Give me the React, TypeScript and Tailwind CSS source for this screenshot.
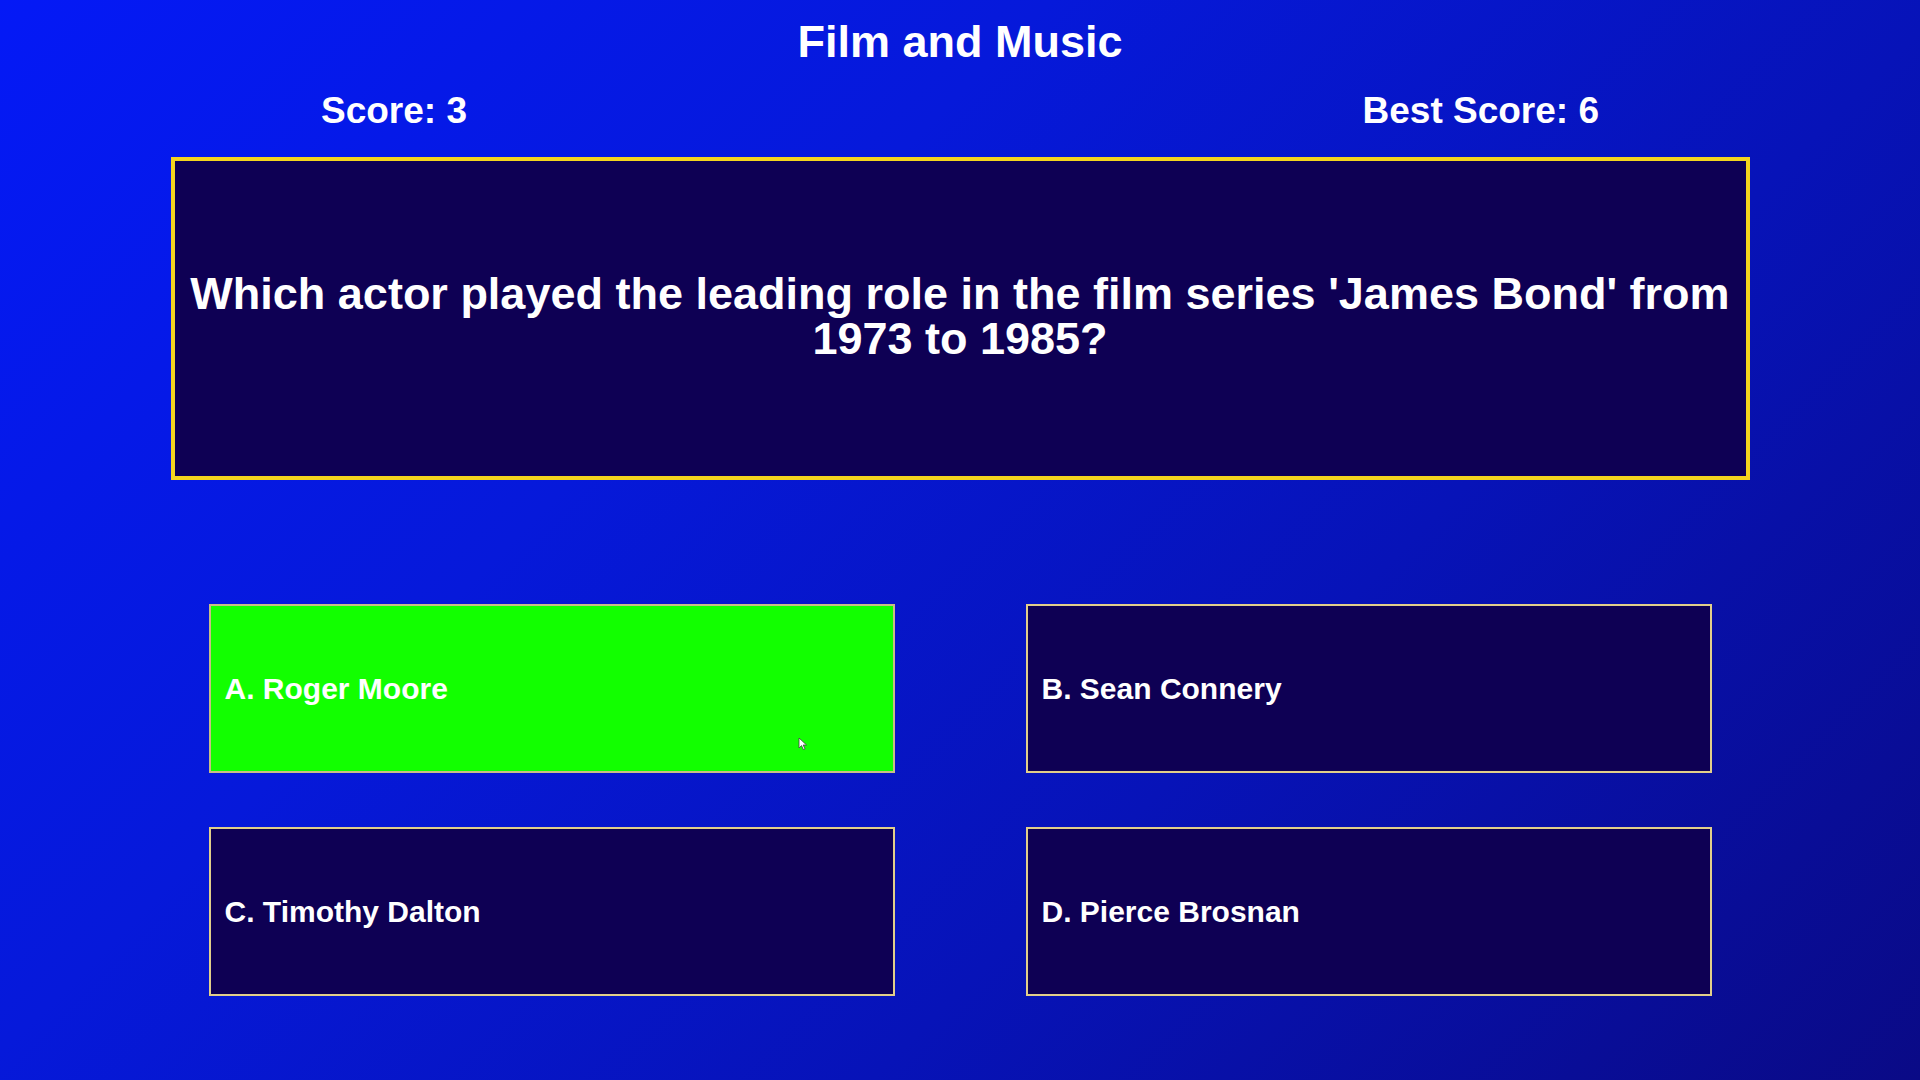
import React from "react";

type Answer = {
  key: string;
  label: string;
  correct?: boolean;
};

const answers: Answer[] = [
  { key: "A", label: "Roger Moore", correct: true },
  { key: "B", label: "Sean Connery" },
  { key: "C", label: "Timothy Dalton" },
  { key: "D", label: "Pierce Brosnan" },
];

function Cursor() {
  return (
    <svg
      className="pointer-events-none absolute left-[587px] top-[131px]"
      width="10"
      height="14"
      viewBox="0 0 10 14"
    >
      <path d="M1 1 L1 11 L3.5 8.6 L5.4 12.6 L7 11.9 L5.2 8 L8.6 8 Z" fill="#ffffff" stroke="#444" strokeWidth="0.8" />
    </svg>
  );
}

function AnswerCard({ answer }: { answer: Answer }) {
  return (
    <div
      className={
        answer.correct
          ? "relative flex h-[169px] items-center border-2 border-[#c9bd86] bg-[#12ff00] px-[14px]"
          : "relative flex h-[169px] items-center border-2 border-[#e2cf8a] bg-[#0e0054] px-[14px]"
      }
    >
      <span className="text-[30px] font-bold text-white">
        {answer.key}. {answer.label}
      </span>
      {answer.correct ? <Cursor /> : null}
    </div>
  );
}

export default function App() {
  return (
    <div className="h-[1080px] w-full overflow-hidden bg-[linear-gradient(135deg,#0419f6_0%,#0619da_35%,#0713b8_65%,#0a0a86_100%)] font-['Liberation_Sans',Arial,sans-serif] text-white">
      <h1 className="pt-[19px] text-center text-[45px] font-bold leading-[45px]">Film and Music</h1>

      <div className="mt-[28px] flex justify-between px-[321px] text-[37px] font-bold leading-[37px]">
        <span>Score: 3</span>
        <span>Best Score: 6</span>
      </div>

      <div className="mx-auto mt-[28px] flex h-[323px] w-[1579px] items-center justify-center border-4 border-[#f4d41e] bg-[#0e0054] px-3 pb-[5px]">
        <p className="text-center text-[45px] font-bold leading-[45px]">
          Which actor played the leading role in the film series 'James Bond' from 1973 to 1985?
        </p>
      </div>

      <div className="mx-auto mt-[124px] grid w-[1503px] grid-cols-2 gap-x-[131px] gap-y-[54px]">
        {answers.map((answer) => (
          <AnswerCard key={answer.key} answer={answer} />
        ))}
      </div>
    </div>
  );
}
